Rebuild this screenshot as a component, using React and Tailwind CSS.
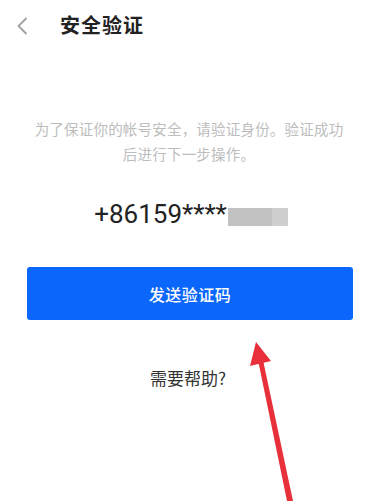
import React from "react";

const cjk = { fontFamily: '"Noto Sans CJK SC", "Noto Sans", sans-serif' };

const App = () => {
  return (
    <div className="relative w-[378px] h-[501px] bg-white overflow-hidden" style={cjk}>
      {/* header */}
      <div className="flex items-center h-[50px] pl-[15px]">
        <svg width="14" height="20" viewBox="0 0 14 20" className="mt-[1px]">
          <path d="M11.5 2 L3.5 10 L11.5 18" fill="none" stroke="#a0a0a0" strokeWidth="1.8" />
        </svg>
        <h1 className="ml-[31px] text-[20px] font-bold text-[#222] tracking-[1px] leading-none">安全验证</h1>
      </div>

      {/* description */}
      <p className="mt-[66px] px-[28px] text-center text-[14.5px] leading-[25px] text-[#bdbdbd] tracking-[0.2px]">
        为了保证你的帐号安全，请验证身份。验证成功
        <br />
        后进行下一步操作。
      </p>

      {/* phone */}
      <div className="mt-[33px] flex items-center justify-center h-[30px] pl-[4px]">
        <span
          className="text-[26px] text-[#222] leading-none"
          style={{ fontFamily: 'Roboto, "Noto Sans", sans-serif' }}
        >
          +86159****
        </span>
        <span className="ml-[1px] mt-[6px] w-[60px] h-[18px] bg-[#cfcfcf] flex">
          <span className="w-[44px] h-full bg-[#c2c2c2]" />
        </span>
      </div>

      {/* button */}
      <div className="mt-[38px] px-[27px] pr-[25px]">
        <button className="w-full h-[53px] rounded-[3px] bg-[#0b67fb] text-white text-[16px] font-medium tracking-[0.5px]">
          发送验证码
        </button>
      </div>

      {/* help */}
      <div className="mt-[45px] text-center text-[17px] text-[#333] pr-[2px]">需要帮助?</div>

      {/* red annotation arrow */}
      <svg className="absolute left-0 top-0 pointer-events-none" width="378" height="501" viewBox="0 0 378 501">
        <path d="M258 360 L263 360 L293 501 L287 501 Z" fill="#e8303a" />
        <path d="M256 342 L250 366 L271 361 Z" fill="#e8303a" />
      </svg>
    </div>
  );
};

export default App;
